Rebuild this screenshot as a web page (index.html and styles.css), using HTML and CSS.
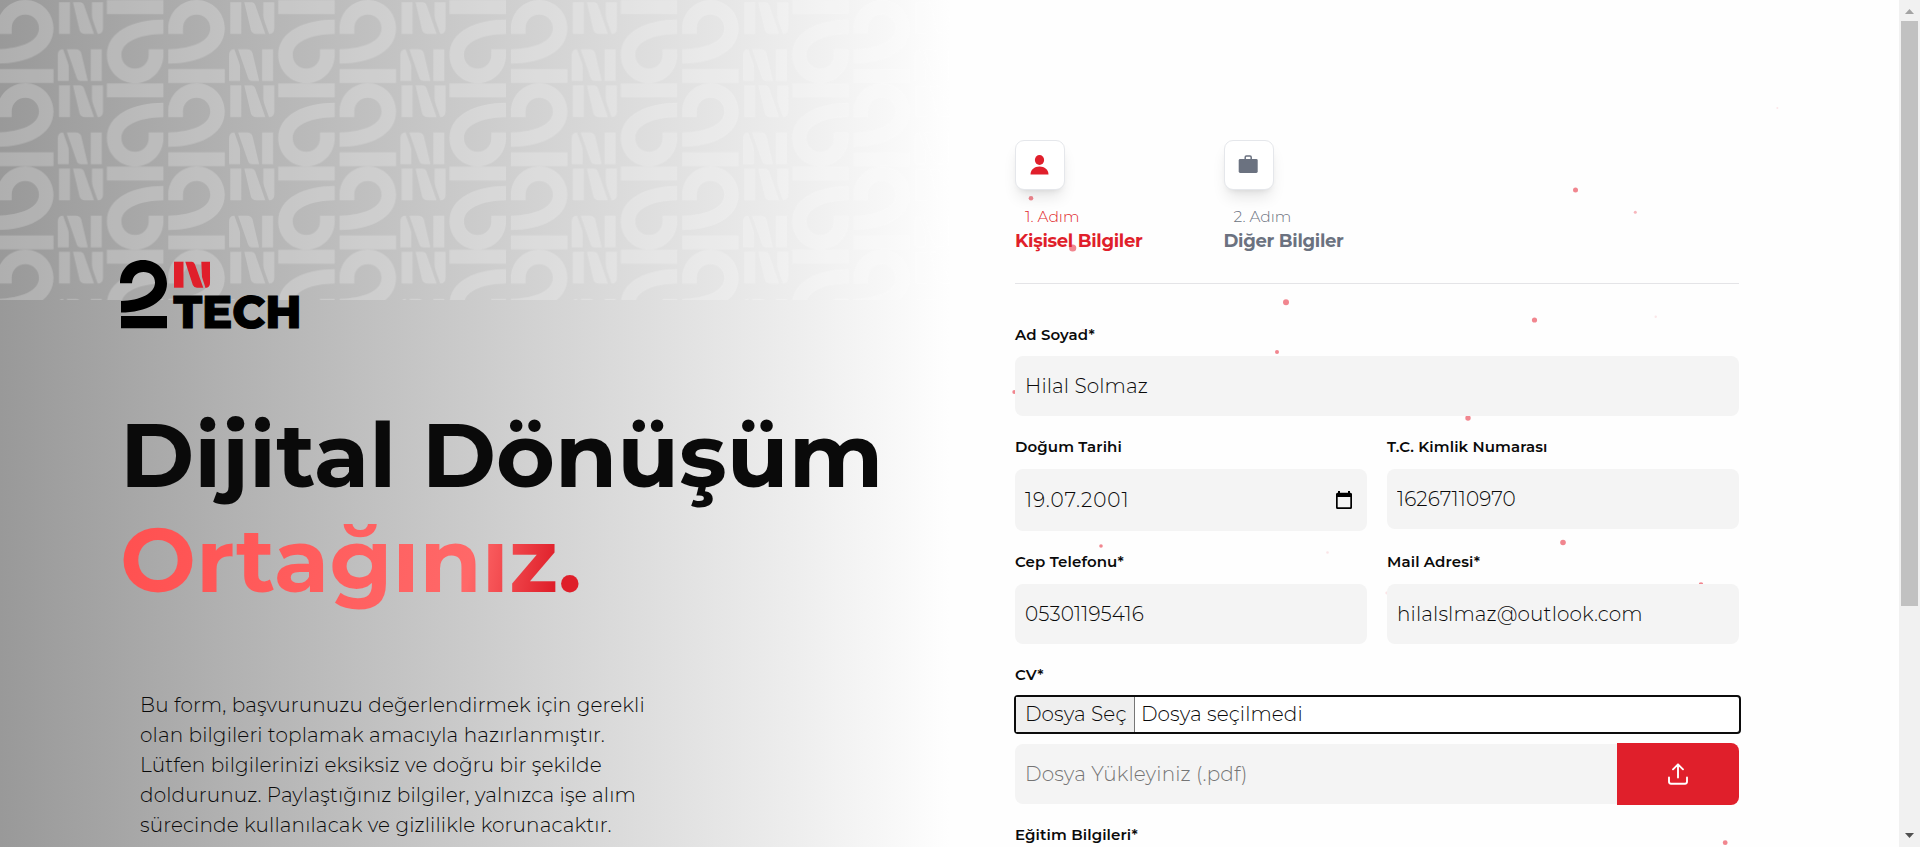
FILE: index.html
```
<!DOCTYPE html>
<html lang="tr">
<head>
<meta charset="utf-8">
<title>2NTECH Başvuru Formu</title>
<link rel="stylesheet" href="styles.css">
</head>
<body>
<div class="page">
  <section class="hero">
    <svg class="hero-pattern" width="950" height="300" aria-hidden="true">
      <defs>
        <g id="two">
          <path d="M0 34V28.3C0 12.5 12.7 0 28.3 0S56.5 12.5 56.5 28.3C56.5 52 30 63.7 0 63.7V49.3C25 48.7 42 41 42 28.3C42 20.5 36 14.6 28.3 14.6S14.7 20.5 14.7 28.3V34Z"/>
          <path d="M0 69H56.5V83H0Z"/>
        </g>
        <g id="en">
          <path d="M0 0H11V31.7H0Z"/>
          <path d="M14 0H21Q24 0 25 3L35 31.7H26Q22 31.7 20.6 28Z"/>
          <path d="M33 0H44V26Q44 31.7 38.7 31.7L34.2 19Q33 16 33 13Z"/>
        </g>
        <pattern id="tile" x="-3" y="0" width="171.3" height="83.2" patternUnits="userSpaceOnUse">
          <use href="#two"/>
          <use href="#en" x="62" y="2.2"/>
          <use href="#en" transform="translate(104.8 81) rotate(180)"/>
          <use href="#two" transform="translate(166.4 83.2) rotate(180)"/>
        </pattern>
      </defs>
      <rect width="950" height="300" fill="url(#tile)"/>
    </svg>
    <div class="hero-content">
      <svg class="logo" width="190" height="80" viewBox="0 0 190 80" role="img" aria-label="2NTECH">
        <path d="M0 23.3C0 9 10 0 23 0S47 9.500 47 23.500C47 42 26 52.500 1 52.500V41C20 40.500 35 33.500 35 22.500C35 16 30 12 23.500 12S12.500 16 12 23.300Z"/>
        <path d="M1 56H47V68.300H1Z"/>
        <g fill="#e01f2b">
          <path d="M54 1.700H63.500V27.700H54Z"/>
          <path d="M65.300 1.700H72Q74 1.700 75 4.500L83.300 27.700H77Q74 27.700 72.800 25Z"/>
          <path d="M81.300 1.700H90V23Q90 27.700 85.500 28L82 17Z"/>
        </g>
        <text class="logo-text" x="53.500" y="68" textLength="128" lengthAdjust="spacingAndGlyphs">TECH</text>
      </svg>
      <h1 class="headline">Dijital Dönüşüm<br><span class="headline-accent">Ortağınız.</span></h1>
      <p class="intro">Bu form, başvurunuzu değerlendirmek için gerekli<br>olan bilgileri toplamak amacıyla hazırlanmıştır.<br>Lütfen bilgilerinizi eksiksiz ve doğru bir şekilde<br>doldurunuz. Paylaştığınız bilgiler, yalnızca işe alım<br>sürecinde kullanılacak ve gizlilikle korunacaktır.</p>
    </div>
  </section>

  <main class="form-panel">
    <svg class="particles" width="949" height="847" viewBox="950 0 949 847" fill="#f1868f" aria-hidden="true">
      <circle cx="1031" cy="198.200" r="2.300"/><circle cx="1072.700" cy="248" r="3.600"/>
      <circle cx="1575.500" cy="190" r="2.500"/><circle cx="1635.300" cy="212.200" r="1.500" opacity=".6"/>
      <circle cx="1286" cy="302.300" r="3"/><circle cx="1534.500" cy="320" r="2.600"/>
      <circle cx="1277" cy="352" r="2"/><circle cx="1014.300" cy="392" r="2"/>
      <circle cx="1468" cy="418" r="2.700"/><circle cx="1101" cy="546" r="1.800"/>
      <circle cx="1563" cy="542.500" r="2.800"/><circle cx="1701" cy="584.500" r="2.300"/>
      <circle cx="1725.200" cy="842.700" r="2.400"/>
      <g opacity=".2"><circle cx="1777.300" cy="108" r="1"/><circle cx="1655.700" cy="316.700" r="1.200"/><circle cx="1327.500" cy="552.500" r="1.300"/><circle cx="1083" cy="330" r="1.300"/><circle cx="1386.700" cy="593" r="1.400"/></g>
    </svg>
    <form class="form">
      <nav class="steps">
        <div class="step step-active">
          <span class="step-icon"><svg width="20" height="22" viewBox="0 0 20 22" fill="currentColor"><ellipse cx="9.500" cy="6" rx="4.600" ry="5"/><path d="M.5 20.500C.5 15.500 4.500 12.400 9.500 12.400S18.500 15.500 18.500 20.500Z"/></svg></span>
          <span class="step-no">1. Adım</span>
          <span class="step-title">Kişisel Bilgiler</span>
        </div>
        <div class="step">
          <span class="step-icon"><svg width="20" height="22" viewBox="0 0 20 22"><rect x=".7" y="5" width="19" height="14" rx="1.400" fill="currentColor"/><path d="M7.200 5.500V3.200Q7.200 2 8.400 2H12Q13.200 2 13.200 3.200V5.500" fill="none" stroke="currentColor" stroke-width="1.500"/></svg></span>
          <span class="step-no">2. Adım</span>
          <span class="step-title">Diğer Bilgiler</span>
        </div>
      </nav>

      <div class="field">
        <label class="label" for="name">Ad Soyad*</label>
        <input class="input" id="name" value="Hilal Solmaz">
      </div>
      <div class="row">
        <div class="field">
          <label class="label">Doğum Tarihi</label>
          <div class="input input-date"><span>19.07.2001</span>
            <svg width="16" height="18" viewBox="0 0 16 18"><path d="M2 0H4V1.800H12V0H14V1.800H14.500Q16 1.800 16 3.300V16.500Q16 18 14.500 18H1.500Q0 18 0 16.500V3.300Q0 1.800 1.500 1.800H2ZM1.700 6V15.800Q1.700 16.300 2.200 16.300H13.800Q14.300 16.300 14.300 15.800V6Z" fill-rule="evenodd"/></svg>
          </div>
        </div>
        <div class="field">
          <label class="label" for="tc">T.C. Kimlik Numarası</label>
          <input class="input" id="tc" value="16267110970">
        </div>
      </div>
      <div class="row">
        <div class="field">
          <label class="label" for="tel">Cep Telefonu*</label>
          <input class="input" id="tel" value="05301195416">
        </div>
        <div class="field">
          <label class="label" for="mail">Mail Adresi*</label>
          <input class="input" id="mail" value="hilalslmaz@outlook.com">
        </div>
      </div>
      <div class="field field-cv">
        <label class="label">CV*</label>
        <div class="file"><span class="file-button">Dosya Seç</span><span class="file-name">Dosya seçilmedi</span></div>
        <div class="upload">
          <input class="input upload-input" placeholder="Dosya Yükleyiniz (.pdf)">
          <button class="upload-button" type="button" aria-label="Yükle">
            <svg width="20" height="22" viewBox="0 0 20 22" fill="none" stroke="#fff" stroke-width="1.900" stroke-linecap="round" stroke-linejoin="round"><path d="M1 14.500V18.500Q1 20.700 3 20.700H17Q19 20.700 19 18.500V14.500M10 14.500V1.500M5 6.300L10 1.300L15 6.300"/></svg>
          </button>
        </div>
      </div>
      <label class="label label-edu">Eğitim Bilgileri*</label>
    </form>
  </main>

  <div class="scrollbar">
    <svg width="9" height="5" viewBox="0 0 9 5"><path d="M0 5L4.500 0L9 5Z" fill="#a3a3a3"/></svg>
    <span class="scroll-thumb"></span>
    <svg width="9" height="5" viewBox="0 0 9 5"><path d="M0 0H9L4.500 5Z" fill="#505050"/></svg>
  </div>
</div>
</body>
</html>
```
FILE: styles.css
```
* { box-sizing: border-box; }
body { margin: 0; background: #fefefe; color: #0a0a0a; font-family: Montserrat, Inter, sans-serif; overflow: hidden; }
.page { display: grid; grid-template-columns: 950px 949px 21px; height: 847px; overflow: hidden; }

.hero { position: relative; background: linear-gradient(90deg, #999, #fefefe); }
.hero-pattern { position: absolute; top: 0; left: 0; fill: #fff; opacity: .22; }
.hero-content { position: relative; display: flex; flex-direction: column; padding: 260px 0 0 120px; }
.logo { display: block; overflow: visible; }
.logo-text { font: 800 45px Montserrat, Inter, sans-serif; stroke: #000; stroke-width: 1px; }
.headline { margin: 63px 0 0; font-size: 90px; font-weight: 700; line-height: 105px; white-space: nowrap; }
.headline-accent { background: linear-gradient(100deg, #ff5050 0%, #ff6868 75%, #df1f2a 93%); -webkit-background-clip: text; background-clip: text; color: transparent; }
.intro { margin: 77px 0 0 20px; font-size: 20px; font-weight: 300; line-height: 30px; letter-spacing: .13px; white-space: nowrap; }

.form-panel { position: relative; padding: 140px 160px 0 65px; overflow: hidden; }
.particles { position: absolute; top: 0; left: 0; }
.form { position: relative; }
.steps { display: grid; grid-template-columns: 208.500px auto; height: 144px; border-bottom: 1px solid #e4e4e7; }
.step { display: flex; flex-direction: column; color: #6b7280; }
.step-active { color: #e01f2b; }
.step-icon { display: flex; align-items: center; justify-content: center; width: 50px; height: 50px; padding-right: 1px; background: #fff; border: 1px solid #e5e7eb; border-radius: 9px; box-shadow: 0 10px 15px -3px rgba(0,0,0,.1), 0 4px 6px -4px rgba(0,0,0,.1); }
.step-no { margin: 15px 0 0 10px; font-size: 15.500px; font-weight: 300; line-height: 24px; }
.step-title { margin-top: -1px; font-size: 18px; font-weight: 700; line-height: 27px; letter-spacing: -.3px; }

.field { display: flex; flex-direction: column; }
.form > .field { margin-top: 40px; }
.form > .field-cv { margin-top: 20px; }
.row { display: grid; grid-template-columns: 352px 352px; column-gap: 20px; align-items: start; margin-top: 20px; }
.row .label, .field-cv .label { margin-bottom: 11px; }
.label { font-size: 15px; font-weight: 600; line-height: 22px; margin-bottom: 10px; letter-spacing: .12px; }
.input { width: 100%; height: 60px; padding: 0 10px; border: 0; border-radius: 8px; background: #f4f4f4; color: #0a0a0a; font: 300 20px Montserrat, Inter, sans-serif; letter-spacing: .12px; }
.input::placeholder { color: #757575; opacity: 1; }
.input-date { display: flex; align-items: center; justify-content: space-between; height: 62px; padding-right: 15px; letter-spacing: .95px; }
.file { display: flex; align-items: stretch; width: 727px; height: 39px; margin: -2px 0 0 -1px; border: 2px solid #0c0c0c; border-radius: 4px; background: #fff; font-size: 20px; font-weight: 300; line-height: 34px; letter-spacing: .1px; }
.file-button { width: 119px; padding-left: 9px; background: #efefef; border-right: 1px solid #767676; }
.file-name { padding-left: 6px; }
.upload { display: flex; align-items: center; margin-top: 9px; }
.upload-input { width: 602px; border-radius: 8px 0 0 8px; }
.upload-button { display: flex; align-items: center; justify-content: center; width: 122px; height: 62px; padding: 0; border: 0; border-radius: 0 8px 8px 0; background: #e01f2b; }
.label-edu { display: block; margin-top: 19px; }

.scrollbar { display: flex; flex-direction: column; align-items: center; background: #f1f1f1; padding: 9px 0 9px; }
.scroll-thumb { width: 17px; height: 585px; margin: 7px 0 auto; background: #c1c1c1; }
```
